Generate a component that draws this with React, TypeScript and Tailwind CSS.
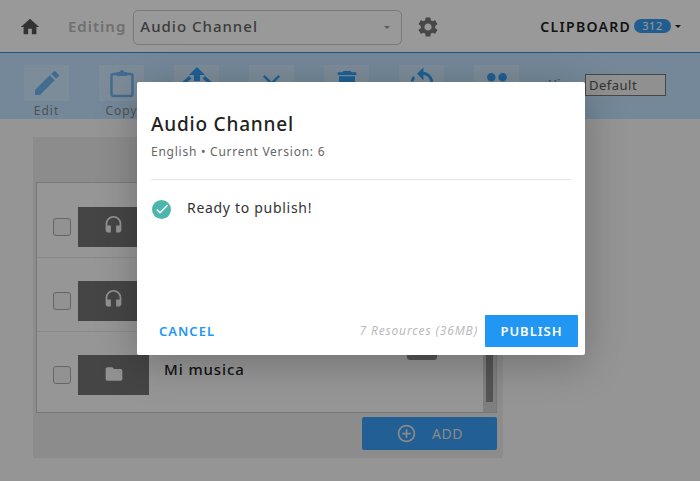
import { MdHome, MdEdit, MdDelete, MdFolder, MdClose, MdRotateLeft, MdSettings, MdHeadset, MdAddCircleOutline, MdPeople, MdCheck } from "react-icons/md";

const ClipIcon = () => (
  <svg width="26" height="30" viewBox="0 0 26 30" fill="none" stroke="currentColor" strokeWidth="2.4">
    <rect x="2.5" y="6" width="21" height="22" rx="2" />
    <path d="M8 7.5V4.5h3a2 2 0 0 1 4 0h3v3z" fill="currentColor" strokeWidth="1" />
  </svg>
);

const MoveIcon = () => (
  <svg width="38" height="34" viewBox="0 0 38 34" fill="currentColor">
    <path d="M19 1l8 8h-5v6h-6V9h-5z" />
    <path d="M11 10l-9 8 9 8 2.500-2.500L7 18l6.500-5.500z" />
    <path d="M27 10l9 8-9 8-2.500-2.500L31 18l-6.500-5.500z" />
  </svg>
);

const tools = [
  { label: "Edit", icon: <MdEdit size={32} />, color: "text-[#6fb4f0]" },
  { label: "Copy", icon: <ClipIcon />, color: "text-[#6fb4f0]" },
  { label: "Move", icon: <MoveIcon />, color: "text-[#32a0f8]" },
  { label: "Delete", icon: <MdClose size={29} />, color: "text-[#32a0f8]" },
  { label: "Trash", icon: <MdDelete size={32} />, color: "text-[#32a0f8]" },
  { label: "Undo", icon: <MdRotateLeft size={34} />, color: "text-[#32a0f8]" },
  { label: "Share", icon: <MdPeople size={34} />, color: "text-[#32a0f8]" },
];

const rows = [
  { name: "Audio 1", folder: false, h: "h-[75px] pt-[14px]" },
  { name: "Audio 2", folder: false, h: "h-[74px] pt-[13px]" },
  { name: "Mi musica", folder: true, h: "h-[80px] pt-[6px]" },
];

export default function App() {
  return (
    <div className="relative h-[481px] w-[700px] overflow-hidden bg-[#f8f8f8] font-['Noto_Sans','Open_Sans',sans-serif] tracking-[1px]">
      {/* top bar */}
      <div className="flex h-[53px] items-center border-b border-[#2f8fe0] bg-white pt-[2px]">
        <MdHome size={22} className="ml-[19px] text-[#555]" />
        <span className="mb-[2px] ml-[27px] text-[15px] font-semibold text-[#bbb]">Editing</span>
        <div className="ml-[7px] flex h-[35px] w-[269px] items-center justify-between rounded-[5px] border border-[#ccc] pl-[6px] pr-[11px]">
          <span className="mb-[2px] text-[15px] font-medium text-[#666]">Audio Channel</span>
          <span className="h-0 w-0 border-x-[3px] border-t-[3px] border-x-transparent border-t-[#999]" />
        </div>
        <MdSettings size={24} className="ml-[14px] text-[#777]" />
        <span className="mb-[2px] ml-[100px] text-[14px] font-semibold tracking-[1.3px] text-[#222]">CLIPBOARD</span>
        <span className="mb-[2px] ml-[3px] flex h-[14px] w-[37px] items-center justify-center rounded-full bg-[#3a9bf0] text-[11px] tracking-[0.5px] text-white">312</span>
        <span className="mb-[2px] ml-[4px] h-0 w-0 border-x-[3px] border-t-[3px] border-x-transparent border-t-[#222]" />
      </div>

      {/* toolbar */}
      <div className="flex h-[66px] items-start gap-[30px] bg-[#c1e3ff] pl-6 pt-3">
        {tools.map((t) => (
          <div key={t.label} className="flex w-[45px] flex-col items-center">
            <div className={`flex h-9 w-[45px] items-center justify-center bg-white/25 ${t.color}`}>{t.icon}</div>
            <span className="mt-[2px] text-xs text-[#888]">{t.label}</span>
          </div>
        ))}
        <div className="flex items-center gap-[6px] pt-[9px]">
          <span className="w-[30px] text-xs text-[#666]">View</span>
          <div className="flex h-[22px] w-[81px] items-center border border-[#777] bg-[#f0f0f0] px-[3px] pt-[2px] text-[13px] tracking-[0.5px] text-[#555]">Default</div>
        </div>
      </div>

      {/* resource panel */}
      <div className="ml-[33px] mt-[18px] flex h-[321px] w-[470px] flex-col bg-[#e9e9e9] pl-[3px] pr-[6px] pt-[45px]">
        <div className="flex h-[231px] border border-[#c8c8c8] bg-[#fbfbfb]">
          <div className="flex flex-1 flex-col">
            {rows.map((r) => (
              <div key={r.name} className={`flex items-center border-b border-[#e5e5e5] pl-4 last:border-b-0 ${r.h}`}>
                <div className="h-[18px] w-[18px] rounded-[3px] border border-[#aaa] bg-[#f4f4f4]" />
                <div className="ml-[7px] flex h-10 w-[71px] items-center justify-center bg-[#737373] text-[#f4f4f4]">
                  {r.folder ? <MdFolder size={20} className="mb-[2px]" /> : <MdHeadset size={21} className="mb-[3px]" />}
                </div>
                <span className="mb-3 ml-[15px] text-[15px] font-medium tracking-[0.9px] text-[#222]">{r.name}</span>
                {r.folder && <div className="mb-auto ml-auto mr-[46px] mt-[-3px] h-[25px] w-[30px] rounded-b-[3px] bg-[#8e8e8e]" />}
              </div>
            ))}
          </div>
          <div className="flex w-[13px] bg-[#d4d4d4] px-[3px] pb-[10px]">
            <div className="w-full bg-[#8e8e8e]" />
          </div>
        </div>
        <div className="mt-1 flex justify-end">
          <div className="flex h-[33px] w-[135px] items-center justify-center gap-[15px] rounded-[2px] bg-[#379ef7] text-[14px] tracking-[0.5px] text-[#e5e5e5]">
            <MdAddCircleOutline size={21} />
            <span>ADD</span>
          </div>
        </div>
      </div>

      {/* dim layer */}
      <div className="absolute inset-0 bg-black/40" />

      {/* publish dialog */}
      <div className="absolute left-[137px] top-[82px] flex h-[273px] w-[448px] flex-col rounded-[2px] bg-white pl-[14px] pr-[7px] shadow-[0_8px_40px_rgba(0,0,0,0.25)]">
        <h2 className="mt-[26px] text-[19px] font-medium leading-[32px] tracking-[0.8px] text-[#222]">Audio Channel</h2>
        <p className="mt-[2px] text-xs leading-[20px] tracking-[0.75px] text-[#666]">English • Current Version: 6</p>
        <div className="mr-[7px] mt-[17px] border-t border-[#e6e6e6]" />
        <div className="mt-[18px] flex items-center">
          <span className="ml-px flex h-[19px] w-[19px] items-center justify-center rounded-full bg-[#4db6ac] text-white">
            <MdCheck size={16} />
          </span>
          <span className="mb-[2px] ml-[16px] text-sm tracking-[0.7px] text-[#333]">Ready to publish!</span>
        </div>
        <div className="mb-2 mt-auto flex items-center justify-between">
          <button className="ml-2 pt-px text-[13px] font-semibold text-[#2196f3]">CANCEL</button>
          <div className="flex items-center gap-[7px]">
            <span className="text-xs italic tracking-[0.85px] text-[#bbb]">7 Resources (36MB)</span>
            <button className="h-8 w-[93px] rounded-[1px] bg-[#2196f3] pt-px text-[13px] font-semibold text-white">PUBLISH</button>
          </div>
        </div>
      </div>
    </div>
  );
}
